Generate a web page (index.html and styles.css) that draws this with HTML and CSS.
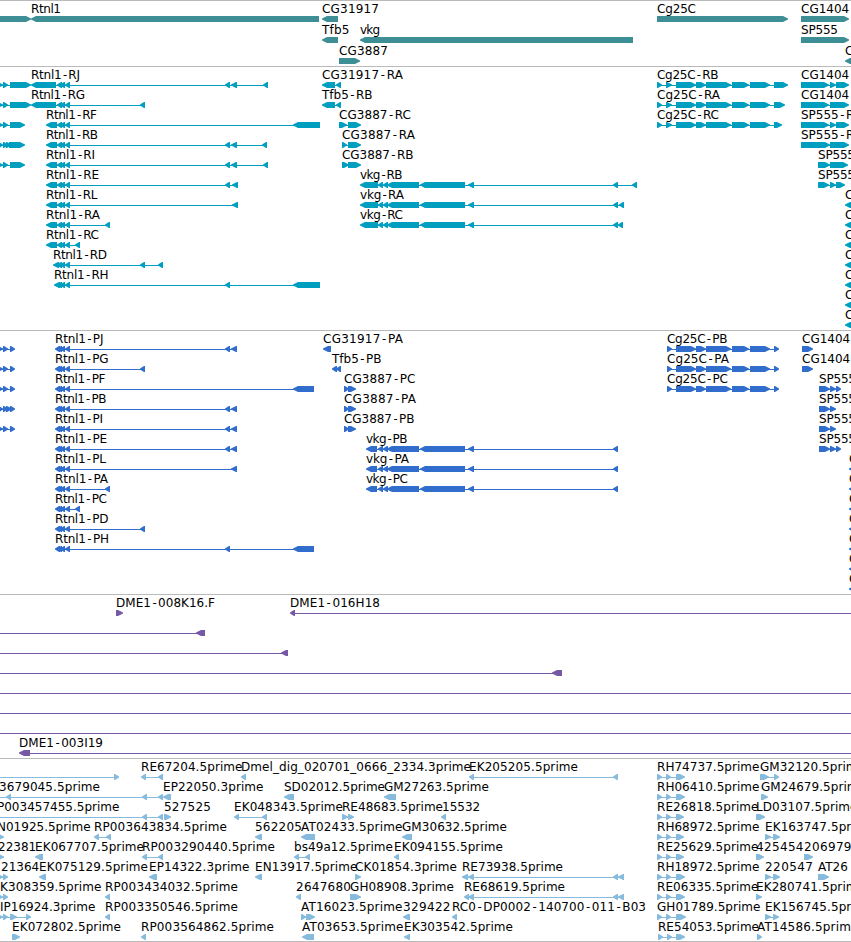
FILE: index.html
```html
<!DOCTYPE html>
<html lang="en">
<head>
  <meta charset="UTF-8" />
  <title>Genome Tracks</title>
  <link rel="stylesheet" href="styles.css">
</head>
<body>
  <div class="tracks">
    <section class="track genes" id="genes"></section>
    <section class="track transcripts" id="transcripts"></section>
    <section class="track proteins" id="proteins"></section>
    <section class="track bacs" id="bacs"></section>
    <section class="track ests" id="ests"></section>
  </div>
  <script src="tracks.js"></script>
</body>
</html>
```
FILE: styles.css
```css
body {
  margin: 0;
  background-color: #fff;
  overflow: hidden;
}
.tracks {
  display: flex;
  flex-direction: column;
  border-bottom: 1px solid #bababa;
}
.track {
  border-top: 1px solid #bababa;
  overflow: hidden;
}
.track svg {
  display: block;
  width: 100%;
  height: 100%;
}
.track text {
  font-family: "DejaVu Sans", sans-serif;
  font-size: 12px;
  fill: #000;
}
.track .dash {
  font-family: "DejaVu Sans Mono", monospace;
}
.genes {
  height: 65px;
  fill: #3e8e95;
}
.transcripts {
  height: 263px;
  fill: #009fc0;
}
.proteins {
  height: 263px;
  fill: #306dcd;
}
.bacs {
  height: 163px;
  fill: #7658a6;
}
.ests {
  height: 182px;
  fill: #87bbdd;
}
```
FILE: tracks.js
```js
// feature: row, label x, label, direction, blocks "start:end" separated by spaces, label width
const rtn = '57:62 60:65 65:70';
const rtnP = '55:60 57:62 60:65 65:70';
const vkg = '378:383 383:388 387:419 420:465 468:474 613:618';
const cg25 = '676:696 696:706 706:731 732:749 750:770';

const genes = [
  [0, 0, '', '>', '-20:31'],
  [0, 31, 'Rtnl1', '<', '31:319', 30],
  [0, 322, 'CG31917', '<', '322:338', 57],
  [0, 657, 'Cg25C', '>', '657:788', 39],
  [0, 801, 'CG1404', '>', '801:849'],
  [1, 322, 'Tfb5', '<', '322:338', 27.5],
  [1, 360, 'vkg', '<', '360:633', 20],
  [1, 801, 'SP555', '>', '801:849', 37],
  [2, 339, 'CG3887', '>', '339:360', 49],
  [2, 845, 'C', '<', '845:870']
];

const transcripts = [
  [0, 0, '', '>', '-4:3 3:8 10:31'],
  [1, 0, '', '>', '-4:3 3:8 10:31'],
  [2, 0, '', '>', '-4:3 3:8 10:25'],
  [3, 0, '', '>', '-2:3 3:8 6:11 9:25'],
  [4, 0, '', '>', '-4:3 3:8 10:25'],
  [0, 31, 'Rtnl1-RJ', '<', `31:56 ${rtn} 225:230 231:237 263:268`, 49],
  [1, 31, 'Rtnl1-RG', '<', `31:56 ${rtn} 140:145`, 54],
  [2, 46, 'Rtnl1-RF', '<', `46:57 ${rtn} 293:320`, 51],
  [3, 46, 'Rtnl1-RB', '<', `46:57 ${rtn} 225:230 231:237 262:267`, 52],
  [4, 46, 'Rtnl1-RI', '<', `46:57 ${rtn} 225:230 231:237 263:268`, 49],
  [5, 46, 'Rtnl1-RE', '<', `46:57 ${rtn} 225:230 232:238`, 53],
  [6, 46, 'Rtnl1-RL', '<', `46:57 ${rtn} 232:238`, 51.5],
  [7, 46, 'Rtnl1-RA', '<', `46:57 ${rtn} 105:110`, 54],
  [8, 46, 'Rtnl1-RC', '<', `46:57 ${rtn} 75:80`, 53],
  [9, 53, 'Rtnl1-RD', '<', `53:59 ${rtn} 140:145 158:163`, 54],
  [10, 54, 'Rtnl1-RH', '<', `54:60 ${rtn} 225:230 293:320`, 54.5],
  [0, 322, 'CG31917-RA', '<', '322:335 336:341', 81],
  [1, 322, 'Tfb5-RB', '<', '322:335 336:341', 50.5],
  [2, 339, 'CG3887-RC', '>', '339:347 348:361', 72],
  [3, 342, 'CG3887-RA', '>', '342:347 348:361', 73],
  [4, 342, 'CG3887-RB', '>', '342:349 348:361', 71.5],
  [5, 360, 'vkg-RB', '<', `360:378 ${vkg} 632:637`, 42.5],
  [6, 360, 'vkg-RA', '<', `360:378 ${vkg} 619:624`, 44],
  [7, 360, 'vkg-RC', '<', `360:378 ${vkg} 618:623`, 43],
  [0, 657, 'Cg25C-RB', '>', `657:662 666:672 ${cg25} 774:788`, 61.5],
  [1, 657, 'Cg25C-RA', '>', `657:662 666:672 ${cg25} 774:785`, 63],
  [2, 657, 'Cg25C-RC', '>', `657:662 666:672 ${cg25} 774:782`, 62],
  [0, 801, 'CG1404', '>', '801:829 830:836 836:849'],
  [1, 801, 'CG1404', '>', '801:829 830:849'],
  [2, 801, 'SP555-R', '>', '801:829 830:836 836:849'],
  [3, 801, 'SP555-R', '>', '801:830 830:849'],
  [4, 818, 'SP555', '>', '818:830 830:848', 37],
  [5, 818, 'SP555', '>', '818:829 830:836 836:845', 37]
];

const proteins = [
  [0, 0, '', '>', '-4:3 3:8 10:15'],
  [1, 0, '', '>', '-4:3 3:8 10:15'],
  [2, 0, '', '>', '-4:3 3:8 10:15'],
  [3, 0, '', '>', '-2:3 3:8 6:12 10:15'],
  [4, 0, '', '>', '-4:3 3:8 10:15'],
  [0, 55, 'Rtnl1-PJ', '<', `${rtnP} 225:230 231:237`, 48.5],
  [1, 55, 'Rtnl1-PG', '<', `${rtnP} 140:145`, 53.5],
  [2, 55, 'Rtnl1-PF', '<', `${rtnP} 293:314`, 50.5],
  [3, 55, 'Rtnl1-PB', '<', `${rtnP} 225:230 231:237`, 51.5],
  [4, 55, 'Rtnl1-PI', '<', `${rtnP} 225:230 231:237`, 48],
  [5, 55, 'Rtnl1-PE', '<', `${rtnP} 225:230 231:237`, 52],
  [6, 55, 'Rtnl1-PL', '<', `${rtnP} 231:237`, 51],
  [7, 55, 'Rtnl1-PA', '<', `${rtnP} 105:110`, 53],
  [8, 55, 'Rtnl1-PC', '<', `${rtnP} 75:80`, 52],
  [9, 55, 'Rtnl1-PD', '<', `${rtnP} 140:145`, 53.5],
  [10, 55, 'Rtnl1-PH', '<', `${rtnP} 225:230 293:314`, 54],
  [0, 323, 'CG31917-PA', '<', '323:331', 80],
  [1, 332, 'Tfb5-PB', '<', '332:337 336:341', 49.5],
  [2, 344, 'CG3887-PC', '>', '344:349 348:356', 71.5],
  [3, 344, 'CG3887-PA', '>', '344:349 348:356', 72],
  [4, 344, 'CG3887-PB', '>', '344:349 348:356', 70.5],
  [5, 366, 'vkg-PB', '<', `366:377 ${vkg}`, 41.5],
  [6, 366, 'vkg-PA', '<', `366:377 ${vkg}`, 43],
  [7, 366, 'vkg-PC', '<', `366:377 ${vkg}`, 42],
  [0, 667, 'Cg25C-PB', '>', `667:672 ${cg25} 774:779`, 60.5],
  [1, 667, 'Cg25C-PA', '>', `667:672 ${cg25} 774:779`, 62],
  [2, 667, 'Cg25C-PC', '>', `667:672 ${cg25} 774:779`, 61],
  [0, 802, 'CG1404', '>', '802:813'],
  [1, 802, 'CG1404', '>', '802:813'],
  [2, 819, 'SP555', '>', '819:830 830:836 836:841', 37],
  [3, 819, 'SP555', '>', '819:830 830:836', 37],
  [4, 819, 'SP555', '>', '819:830 830:836', 37],
  [5, 819, 'SP555', '>', '819:830 830:836 836:841', 37]
];

for (let row = 6; row <= 12; row++) {
  transcripts.push([row, 845, 'C', '<', '845:870']);
  proteins.push([row, 849, 'C', '<', '849:870']);
}

const bacs = [
  [0, 116, 'DME1-008K16.F', '>', '116:123', 99],
  [0, 290, 'DME1-016H18', '<', '290:295 900:910', 90],
  [1, 0, '', '<', '-20:-10 196:205'],
  [2, 0, '', '<', '-20:-10 281:288'],
  [3, 0, '', '<', '-20:-10 552:562'],
  [4, 0, '', '<', '-20:-10 900:910'],
  [5, 0, '', '<', '-20:-10 900:910'],
  [6, 0, '', '<', '-20:-10 900:910'],
  [7, 19, 'DME1-003I19', '<', '19:30 900:910', 84]
];

const ests = [
  [0, 0, '', '>', '-20:-10 114:119'],
  [0, 141, 'RE67204.5prime', '<', '141:146 158:163', 101.5],
  [0, 241, 'Dmel_dig_020701_0666_2334.3prime', '<', '241:246', 230],
  [0, 469, 'EK205205.5prime', '<', '469:474 613:618', 109],
  [0, 657, 'RH74737.5prime', '>', '657:662 666:671 676:685', 102.5],
  [0, 760, 'GM32120.5prime', '>', '760:769 774:779', 105],
  [1, -1, '3679045.5prime', '<', '-20:-10 6:11 142:147 158:163', 101],
  [1, 163, 'EP22050.3prime', '<', '163:171', 100.5],
  [1, 284, 'SD02012.5prime', '<', '284:294', 101],
  [1, 384, 'GM27263.5prime', '<', '384:396', 105],
  [1, 657, 'RH06410.5prime', '>', '657:662 666:671 676:685', 102.5],
  [1, 761, 'GM24679.5prime', '>', '761:768', 105],
  [2, -3, 'P003457455.5prime', '<', '-20:-10 142:147 158:163'],
  [2, 164, '527525', '>', '164:171', 47],
  [2, 234, 'EK048343.5prime', '<', '234:239 262:267', 109],
  [2, 342, 'RE48683.5prime', '>', '342:348 348:354', 101],
  [2, 442, '15532', '<', '441:446'],
  [2, 657, 'RE26818.5prime', '>', '657:662 666:671 676:684', 101.5],
  [2, 756, 'LD03107.5prime', '>', '756:765', 101.5],
  [3, -3, 'N01925.5prime', '>', '-3:4'],
  [3, 94, 'RP003643834.5prime', '<', '94:99 106:111', 133],
  [3, 255, '562205', '<', '255:262', 47],
  [3, 301, 'AT02433.5prime', '<', '301:315', 101.5],
  [3, 402, 'GM30632.5prime', '<', '402:412', 105],
  [3, 657, 'RH68972.5prime', '>', '657:662 666:671 676:684', 102.5],
  [3, 765, 'EK163747.5prime', '>', '765:771 773:780', 109],
  [4, -2, '22381', '>', '-3:4'],
  [4, 35, 'EK067707.5prime', '<', '35:43', 109],
  [4, 142, 'RP003290440.5prime', '<', '142:147 158:163', 133],
  [4, 294, 'bs49a12.5prime', '<', '294:299 305:310', 99],
  [4, 394, 'EK094155.5prime', '<', '394:399', 109],
  [4, 657, 'RE25629.5prime', '>', '657:662 666:671 676:684', 101.5],
  [4, 756, '425454', '>', '756:764', 47.5],
  [4, 804, '206979', '>', '804:813', 47.5],
  [5, 1, '21364', '>', '-3:3 3:8'],
  [5, 39, 'EK075129.5prime', '<', '39:46', 109],
  [5, 149, 'EP14322.3prime', '<', '149:157', 100.5],
  [5, 255, 'EN13917.5prime', '<', '255:262', 102.5],
  [5, 355, 'CK01854.3prime', '>', '355:361', 102],
  [5, 462, 'RE73938.5prime', '<', '462:468 468:474 613:618 618:624', 101],
  [5, 657, 'RH18972.5prime', '>', '657:662 666:671 676:685', 102.5],
  [5, 765, '220547', '>', '765:771 773:780', 48],
  [5, 818, 'AT26', '>', '818:829'],
  [6, 0, 'K308359.5prime', '>', '-3:3 3:8', 101.5],
  [6, 105, 'RP003434032.5prime', '<', '105:110', 133],
  [6, 296, '2647680', '<', '296:301', 55],
  [6, 350, 'GH08908.3prime', '>', '350:361', 104],
  [6, 464, 'RE68619.5prime', '<', '464:469 468:474 613:618 618:624', 101],
  [6, 657, 'RE06335.5prime', '>', '657:662 666:671 676:685', 101.5],
  [6, 756, 'EK280741.5prime', '>', '756:762', 109],
  [7, 0, 'IP16924.3prime', '>', '-3:3 3:8 10:17 26:31'],
  [7, 105, 'RP003350546.5prime', '<', '105:110', 133],
  [7, 301, 'AT16023.5prime', '>', '301:306 306:315', 101.5],
  [7, 403, '329422', '<', '403:410', 47.5],
  [7, 452, 'RC0-DP0002-140700-011-B03', '<', '452:457', 194],
  [7, 657, 'GH01789.5prime', '>', '657:662 666:671 676:686', 103.5],
  [7, 765, 'EK156745.5prime', '>', '765:771 773:779', 109],
  [8, 12, 'EK072802.5prime', '>', '12:20', 109],
  [8, 141, 'RP003564862.5prime', '<', '141:146', 133],
  [8, 302, 'AT03653.5prime', '<', '302:314', 101.5],
  [8, 404, 'EK303542.5prime', '<', '404:410', 109],
  [8, 658, 'RE54053.5prime', '>', '658:663 667:672 676:685', 101],
  [8, 757, 'AT14586.5prime', '>', '757:762', 101.5]
];

// pointed block, 6px high
function arrow(start, end, top, dir) {
  const head = Math.min(5, end - start - 1);
  const tip = dir === '<' ? start : end;
  const neck = dir === '<' ? start + head : end - head;
  const tail = dir === '<' ? end : start;
  return `<path d="M${tip} ${top + 2.5}L${neck} ${top}H${tail}V${top + 6}H${neck}L${tip} ${top + 3.5}Z"/>`;
}

function drawTrack(id, features, rowHeight) {
  let shapes = '';
  let labels = '';
  features.forEach(([row, x, label, dir, blocks, width]) => {
    const top = row * rowHeight;
    const spans = blocks.split(' ').map(b => b.split(':').map(Number));
    const first = spans[0][0];
    const last = spans[spans.length - 1][1];
    if (spans.length > 1) {
      shapes += `<rect x="${first + 2}" y="${top + 18}" width="${last - first - 4}" height="1"/>`;
    }
    spans.forEach(([start, end]) => {
      shapes += arrow(start, end, top + 15, dir);
    });
    if (label) {
      const length = width ? ` textLength="${width}"` : '';
      const text = label.replace(/-/g, '<tspan class="dash">-</tspan>');
      labels += `<text x="${x}" y="${top + 12}"${length}>${text}</text>`;
    }
  });
  document.getElementById(id).innerHTML = `<svg>${shapes}${labels}</svg>`;
}

drawTrack('genes', genes, 21);
drawTrack('transcripts', transcripts, 20);
drawTrack('proteins', proteins, 20);
drawTrack('bacs', bacs, 20);
drawTrack('ests', ests, 20);
```
